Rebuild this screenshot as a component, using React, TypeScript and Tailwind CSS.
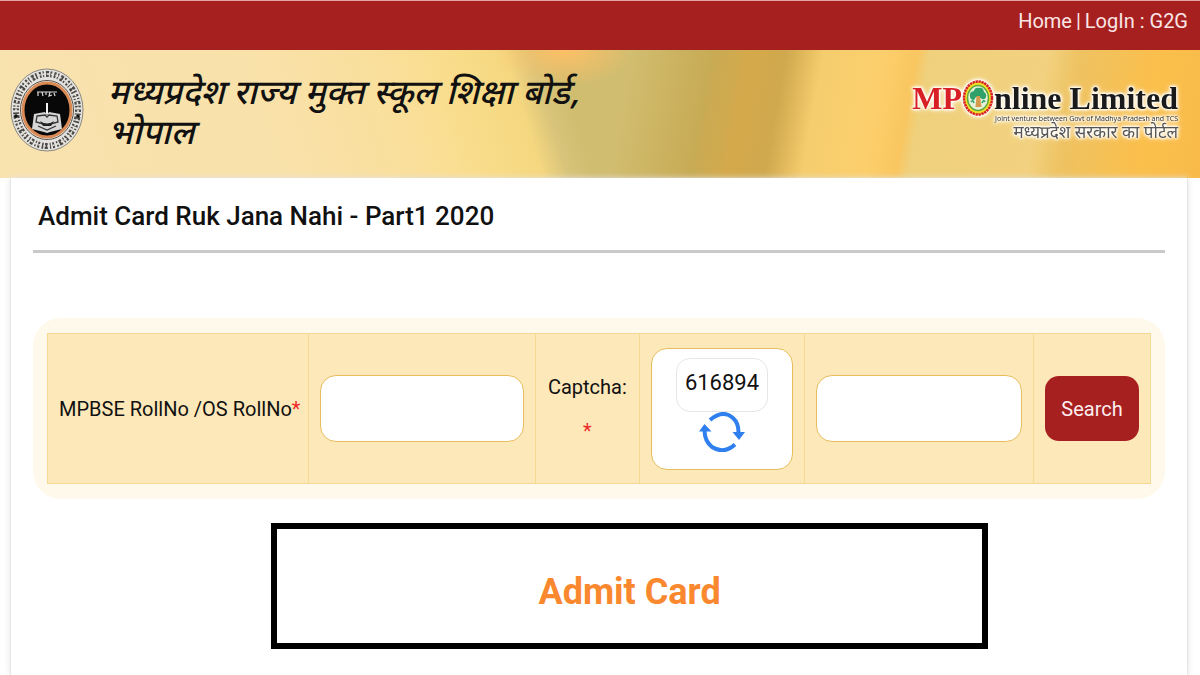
const Emblem = () => (
  <svg className="h-[84px] w-[74px] shrink-0" viewBox="0 0 74 84" preserveAspectRatio="none" aria-hidden="true">
    <ellipse cx="37" cy="42" rx="36" ry="41" fill="#e4e2de" stroke="#8b8880" strokeWidth="1" />
    <ellipse cx="37" cy="42" rx="31" ry="36" fill="none" stroke="#4a4946" strokeWidth="6" strokeDasharray="2 1.6 1.2 2 3 1.4 1.6 2.2" />
    <ellipse cx="37" cy="42" rx="31" ry="36" fill="none" stroke="#e4e2de" strokeWidth="1.6" strokeDasharray="2 2.4 3 1.6" />
    <ellipse cx="37" cy="42" rx="26.5" ry="29.5" fill="#f3efe8" stroke="#55504a" strokeWidth="1" />
    <ellipse cx="37" cy="42" rx="24" ry="27" fill="#080808" stroke="#d98a55" strokeWidth="3" />
    <path d="M27 24h20M28 24v4M32 24l1 4M36 24v3M40 24l-1 4 3-1M44 25l1 3" stroke="#d8d8d8" strokeWidth="1.2" fill="none" />
    <path d="M37 35v11" stroke="#f4f4f4" strokeWidth="2" />
    <path d="M24 46l11-2 2 3 2-3 11 2 2 15-12 3-3 1-3-1-12-3z" fill="#d6d6d6" />
    <path d="M27 48l8-1 2 2 2-2 8 1 1 6-11 3-11-3zM28 58l9 4 9-4" stroke="#333" strokeWidth="1.3" fill="none" />
    <path d="M30 53q7 5 14 0l-3 5h-8z" fill="#222" />
    <circle cx="6" cy="48" r="1.8" fill="#111" />
    <circle cx="68" cy="48" r="1.8" fill="#111" />
  </svg>
)

const TreeSeal = () => (
  <svg className="h-9 w-8 shrink-0" viewBox="0 0 32 36" aria-hidden="true">
    <ellipse cx="16" cy="18" rx="14" ry="16.5" fill="#f0e02a" stroke="#d81f26" strokeWidth="2.5" strokeDasharray="2.4 .6" />
    <ellipse cx="16" cy="18" rx="10.5" ry="12.5" fill="#e6f1d8" stroke="#5ea83c" strokeWidth="1.5" />
    <path d="M8 16q-1-4 4-5 1-4 5-3 4-1 5 4 3 2 2 5-1 3-4 2l-3-2h-3l-2 3q-4 0-4-4z" fill="#2fa06a" />
    <path d="M14.500 16h3.500l1.500 11h-6z" fill="#d79a4d" />
    <path d="M9 22q2-3 3 1M20 23q2-4 3-1" stroke="#2fa06a" strokeWidth="1.5" fill="none" />
  </svg>
)

const RefreshIcon = () => (
  <svg className="h-10 w-[46px]" viewBox="0 0 46 40" fill="none" aria-hidden="true">
    <path d="M11 8Q24-3 34 6Q39.500 11 39.500 20" stroke="#2f7fee" strokeWidth="4" />
    <path d="M36 32.500Q25 42.500 13 35Q5.500 29 5.500 18" stroke="#2f7fee" strokeWidth="4" />
    <path d="M33.500 20H46L40 28z" fill="#2f7fee" />
    <path d="M0 19.500H12.500L5.500 12z" fill="#2f7fee" />
  </svg>
)

const MpOnlineLogo = () => (
  <div className="flex flex-col items-end leading-none [filter:drop-shadow(0_0_1px_#fff)_drop-shadow(0_0_1px_#fff)_drop-shadow(0_0_2px_#fff)]">
    <div className="flex items-center font-['Liberation_Serif',serif] text-[32px] leading-8 font-bold">
      <span className="text-[#d81f26]">MP</span>
      <TreeSeal />
      <span className="text-[#1a1a1a]">nline Limited</span>
    </div>
    <p className="font-['Noto_Sans',sans-serif] text-[7px] leading-[6px] text-[#333]">
      Joint venture between Govt of Madhya Pradesh and TCS
    </p>
    <p className="font-['Noto_Sans_Devanagari','Noto_Sans',sans-serif] text-[17px] leading-6 text-[#555]">
      मध्यप्रदेश सरकार का पोर्टल
    </p>
  </div>
)

const cell = 'border border-[#f5d894] px-[11px]'
const field = 'block h-[67px] w-full rounded-[16px] border border-[#e8bd5c] bg-white px-4 text-xl'

export default function App() {
  return (
    <div className="min-h-screen overflow-hidden bg-white font-['Roboto',sans-serif] text-[#111]">
      <nav className="flex h-[50px] items-start justify-end gap-1 border-t border-[#e3a3a3] bg-[#a72020] px-3 pt-2 text-[20px] leading-6 text-[#fbe6e6]">
        <a href="#home">Home</a>
        <span>|</span>
        <a href="#login">LogIn : G2G</a>
      </nav>

      <header className="flex h-32 items-start justify-between bg-[radial-gradient(ellipse_70px_36px_at_47%_0%,#fdc066,#fdc06600),linear-gradient(73deg,#f8e2ae_0%,#f9e1aa_45%,#fadf9c_65%,#f9dc88_78%,#f5d780_85%,#d8c47a_89%,#d1bd70_93%,#d1bd70_100%),linear-gradient(100deg,#d1bd70_0%,#d1bd70_5%,#c8ab55_18%,#d4a94b_24%,#d0a84d_30%,#f5cd6e_36%,#fccf6c_46%,#f9c660_51%,#efd07c_53%,#f2d280_72%,#eec363_77%,#fbbf4b_90%,#f8bb4a_100%)] bg-[size:100%_100%,50%_100%,50%_100%] bg-[position:0_0,0_0,100%_0] bg-no-repeat px-[22px] pt-[18px] pl-[10px]">
        <div className="flex items-start gap-6">
          <Emblem />
          <h1 className="w-[490px] pt-2 font-['Noto_Sans_Devanagari','Noto_Sans',sans-serif] text-[34px] leading-10 font-medium italic">
            मध्यप्रदेश राज्य मुक्त स्कूल शिक्षा बोर्ड, भोपाल
          </h1>
        </div>
        <div className="pt-3">
          <MpOnlineLogo />
        </div>
      </header>

      <main className="mr-3 ml-[10px] min-h-[497px] border-x border-[#e6e6e6] px-[22px] shadow-[0_0_6px_#e4e4e4]">
        <h2 className="border-b-[3px] border-[#c9c9c9] px-[5px] pt-5 pb-4 text-[26px] leading-9 font-medium">
          Admit Card Ruk Jana Nahi - Part1 2020
        </h2>

        <form className="mt-[65px] rounded-[28px] bg-[#fff9ec] px-[14px] py-[15px]" onSubmit={(e) => e.preventDefault()}>
          <table className="h-[151px] w-full table-fixed border-collapse bg-[#fde8b9]">
            <colgroup>
              <col className="w-[23.7%]" />
              <col className="w-[20.5%]" />
              <col className="w-[9.5%]" />
              <col className="w-[14.9%]" />
              <col className="w-[20.8%]" />
              <col className="w-[10.6%]" />
            </colgroup>
            <tbody>
              <tr>
                <td className={cell}>
                  <label htmlFor="rollno" className="text-[20px] whitespace-nowrap">
                    MPBSE RollNo /OS RollNo<span className="text-[#ee2a2a]">*</span>
                  </label>
                </td>
                <td className={cell}>
                  <input id="rollno" type="text" className={field} />
                </td>
                <td className={cell}>
                  <label htmlFor="captcha" className="block text-center text-[20px] leading-[44px]">
                    Captcha: <span className="block text-[#ee2a2a]">*</span>
                  </label>
                </td>
                <td className={cell}>
                  <div className="flex h-[122px] flex-col items-center rounded-[16px] border border-[#e8bd5c] bg-white pt-[9px]">
                    <span className="h-[54px] w-[92px] rounded-[14px] border border-[#e6e6e6] text-center text-[22px] leading-[48px]">616894</span>
                    <button type="button" aria-label="Refresh captcha">
                      <RefreshIcon />
                    </button>
                  </div>
                </td>
                <td className={cell}>
                  <input id="captcha" type="text" className={field} />
                </td>
                <td className={cell}>
                  <button type="submit" className="h-[65px] w-full rounded-[14px] bg-[#a72020] text-[20px] text-[#fdeeee]">
                    Search
                  </button>
                </td>
              </tr>
            </tbody>
          </table>
        </form>

        <section className="mt-6 ml-[21%] flex h-[126px] w-[63.4%] items-center justify-center border-[6px] border-black pt-3">
          <a href="#admit-card" className="text-[36px] font-bold text-[#f9882f]">Admit Card</a>
        </section>
      </main>
    </div>
  )
}
